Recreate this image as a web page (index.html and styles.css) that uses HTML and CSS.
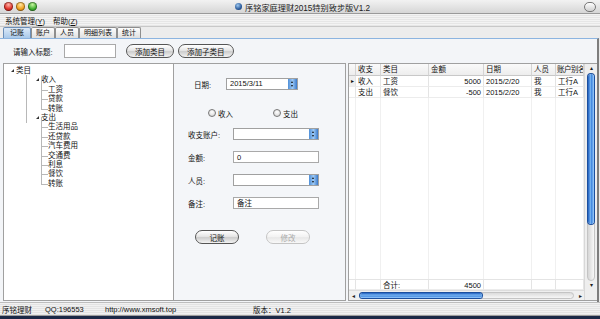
FILE: index.html
```html
<!DOCTYPE html>
<html lang="zh-CN">
<head>
  <meta charset="UTF-8" />
  <title>序铭家庭理财2015特别致步版V1.2</title>
  <link rel="stylesheet" href="styles.css">
</head>
<body>
<div class="window">

  <div class="titlebar">
    <div class="lights">
      <span class="light red"></span>
      <span class="light yellow"></span>
      <span class="light green"></span>
    </div>
    <div class="title"><span class="app-icon"></span>序铭家庭理财2015特别致步版V1.2</div>
    <span class="pill"></span>
  </div>

  <div class="menubar">
    <span>系统管理(<u>Y</u>)</span>
    <span>帮助(<u>Z</u>)</span>
  </div>

  <div class="tabs">
    <span class="tab active">记账</span>
    <span class="tab">账户</span>
    <span class="tab">人员</span>
    <span class="tab">明细列表</span>
    <span class="tab">统计</span>
  </div>

  <div class="page">
    <div class="toolbar">
      <label>请输入标题:</label>
      <input class="field title-field" type="text">
      <button class="aqua">添加类目</button>
      <button class="aqua">添加子类目</button>
    </div>

    <div class="panes">
      <!-- category tree -->
      <div class="tree">
        <ul class="root">
          <li class="open">类目
            <ul>
              <li class="open">收入
                <ul class="leaves">
                  <li>工资</li>
                  <li>贷款</li>
                  <li>转账</li>
                </ul>
              </li>
              <li class="open last">支出
                <ul class="leaves">
                  <li>生活用品</li>
                  <li>还贷款</li>
                  <li>汽车费用</li>
                  <li>交通费</li>
                  <li>利息</li>
                  <li>餐饮</li>
                  <li>转账</li>
                </ul>
              </li>
            </ul>
          </li>
        </ul>
      </div>

      <!-- entry form -->
      <div class="form">
        <div class="row date-row">
          <label>日期:</label>
          <div class="select date"><span>2015/3/11</span><i class="spin"></i></div>
        </div>
        <div class="row radio-row">
          <span class="radio"><i></i>收入</span>
          <span class="radio"><i></i>支出</span>
        </div>
        <div class="row">
          <label>收支账户:</label>
          <div class="select"><span></span><i class="spin"></i></div>
        </div>
        <div class="row">
          <label>金额:</label>
          <div class="field">0</div>
        </div>
        <div class="row">
          <label>人员:</label>
          <div class="select"><span></span><i class="spin"></i></div>
        </div>
        <div class="row">
          <label>备注:</label>
          <div class="field">备注</div>
        </div>
        <div class="row buttons">
          <button class="aqua">记账</button>
          <button class="aqua" disabled>修改</button>
        </div>
      </div>

      <!-- detail grid -->
      <div class="grid">
        <div class="grid-body">
          <div class="cols head">
            <span></span><span>收支</span><span>类目</span><span>金额</span><span>日期</span><span>人员</span><span class="last-col">账户别名</span>
          </div>
          <div class="cols">
            <span class="cur">&#9656;</span><span>收入</span><span>工资</span><span class="num">5000</span><span>2015/2/20</span><span>我</span><span>工行A</span>
          </div>
          <div class="cols">
            <span></span><span>支出</span><span>餐饮</span><span class="num">-500</span><span>2015/2/20</span><span>我</span><span>工行A</span>
          </div>
          <div class="cols filler">
            <span></span><span></span><span></span><span></span><span></span><span></span><span></span>
          </div>
          <div class="cols total">
            <span></span><span></span><span>合计:</span><span class="num">4500</span><span></span><span></span><span></span>
          </div>
          <div class="hscroll">
            <span class="arrow">&#9666;</span>
            <div class="htrack"><div class="hthumb"></div></div>
            <span class="arrow">&#9656;</span>
          </div>
        </div>
        <div class="vscroll">
          <span class="arrow">&#9652;</span>
          <div class="vtrack"><div class="vthumb"></div></div>
          <span class="arrow">&#9662;</span>
        </div>
      </div>
    </div>
  </div>

  <div class="statusbar">
    <span class="s1">序铭理财</span>
    <span class="s2">QQ:196553</span>
    <span class="s3">http://www.xmsoft.top</span>
    <span class="s4">版本：V1.2</span>
  </div>
  <div class="desk"></div>
</div>
</body>
</html>
```

FILE: styles.css
```css
body {
  margin: 0;
  font-family: "Liberation Sans", "Noto Sans CJK SC", sans-serif;
  font-size: 7.5px;
  color: #111;
  background: #1b2846;
}

.window {
  width: 600px;
  height: 319px;
  display: flex;
  flex-direction: column;
  background: #e9e9e9;
  overflow: hidden;
}

/* title bar */
.titlebar {
  height: 13px;
  display: flex;
  align-items: center;
  padding: 0 4px 0 4px;
  background: linear-gradient(#f2f2f2, #d6d6d6);
  border-bottom: 1px solid #9a9a9a;
}

.lights {
  display: flex;
  gap: 3px;
  width: 200px;
}

.light {
  width: 9px;
  height: 9px;
  border-radius: 50%;
  box-shadow: inset 0 0 0 1px rgba(0,0,0,0.35);
}

.red { background: radial-gradient(circle at 50% 30%, #ffb3a8, #e0332a 55%, #9c1510); }
.yellow { background: radial-gradient(circle at 50% 30%, #ffe6a0, #f0a020 55%, #a86500); }
.green { background: radial-gradient(circle at 50% 30%, #c8f5a0, #40b030 55%, #1e7015); }

.title {
  flex: 1;
  display: flex;
  align-items: center;
  gap: 3px;
  padding-left: 31px;
  font-size: 8.2px;
  color: #222;
}

.app-icon {
  width: 7px;
  height: 7px;
  border-radius: 50%;
  background: radial-gradient(circle at 40% 35%, #9ec8f0, #2a5a9a 60%, #0d2a55);
}

.pill {
  width: 10px;
  height: 8px;
  border-radius: 5px;
  border: 1px solid #777;
  background: linear-gradient(#fff, #cfcfcf);
}

/* menu */
.menubar {
  height: 12px;
  display: flex;
  align-items: center;
  gap: 8px;
  padding-left: 5px;
  background: repeating-linear-gradient(#f3f3f3 0 1px, #e6e6e6 1px 2px);
  border-bottom: 1px solid #c8c8c8;
}

.menubar u { text-decoration: underline; }

/* tabs */
.tabs {
  height: 11px;
  display: flex;
  align-items: flex-end;
  padding-left: 3px;
  background: #ececec;
}

.tab {
  height: 10px;
  line-height: 10px;
  padding: 0 4px;
  font-size: 7px;
  border: 1px solid #8e8e8e;
  border-bottom: none;
  border-radius: 2px 2px 0 0;
  background: linear-gradient(#fdfdfd, #e0e0e0);
}

.tab.active {
  padding: 0 6px;
  background: linear-gradient(#dbe9f8, #a9c9ea);
  border-color: #6c8fb8;
}

/* tab page */
.page {
  flex: 1;
  display: flex;
  flex-direction: column;
  background: #f3f5f8;
  border-top: 1px solid #8cb4e0;
  border-right: 2px solid #7d7d7d;
  margin-right: 1px;
}

.toolbar {
  height: 24px;
  display: flex;
  align-items: center;
  padding-left: 13px;
}

.toolbar label { width: 51px; }

.field {
  height: 12px;
  line-height: 12px;
  padding: 0 3px;
  border: 1px solid #a9a9a9;
  background: #fff;
  box-sizing: border-box;
  font-family: inherit;
  font-size: inherit;
}

.title-field {
  width: 52px;
  height: 14px;
  margin-right: 10px;
}

button.aqua {
  height: 14px;
  padding: 0 8px;
  margin-right: 4px;
  font-family: inherit;
  font-size: 7.5px;
  color: #111;
  border: 1px solid #555;
  border-radius: 7px;
  background: linear-gradient(#ffffff, #e6e6e6 45%, #cdcdcd 55%, #f2f2f2);
  box-shadow: inset 0 0 1px #fff;
}

button.aqua:disabled {
  color: #aaa;
  border-color: #c4c4c4;
  background: linear-gradient(#ffffff, #f2f2f2 50%, #e8e8e8 55%, #f8f8f8);
}

.panes {
  flex: 1;
  display: flex;
  padding-left: 3px;
  margin-bottom: 1px;
}

/* tree */
.tree {
  width: 172px;
  background: #fff;
  border: 1px solid #a0a0a0;
  padding-top: 2px;
  box-sizing: border-box;
}

.tree ul {
  list-style: none;
  margin: 0;
  padding: 0;
}

.tree li {
  position: relative;
  line-height: 9.4px;
}

.root > li { padding-left: 12px; }
.root > li > ul > li { padding-left: 14px; }
.root > li > ul { position: relative; }
.root > li > ul::before {
  content: "";
  position: absolute;
  left: 10px;
  top: 0;
  height: 48px;
  border-left: 1px solid #b8b8b8;
}

.tree li.open::before {
  content: "";
  position: absolute;
  top: 3px;
  width: 0;
  height: 0;
  border-left: 3px solid transparent;
  border-bottom: 3px solid #333;
}

.root > li.open::before { left: 7px; }
.root > li > ul > li.open::before { left: 20px; }
.root > li > ul > li.open { padding-left: 25px; }

.leaves {
  position: relative;
  margin-left: -4px !important;
}

.leaves li { padding-left: 11px; }
.leaves li::before {
  content: "";
  position: absolute;
  left: 4px;
  top: -5px;
  width: 6px;
  height: 10px;
  border-left: 1px solid #b8b8b8;
  border-bottom: 1px solid #b8b8b8;
}

/* form */
.form {
  width: 173px;
  box-sizing: border-box;
  border: 1px solid #a0a0a0;
  border-left: none;
  background: #f4f6f9;
  display: flex;
  flex-direction: column;
  padding-left: 14px;
}

.row {
  display: flex;
  align-items: center;
  height: 12px;
  margin-top: 11px;
}

.row label { width: 45px; }
.row .field, .row .select { width: 86px; }

.date-row { margin-top: 14px; padding-left: 6px; }
.date-row label { width: 32px; }
.date-row .select { width: 72px; }

.radio-row {
  margin-top: 17px;
  padding-left: 20px;
  gap: 40px;
}

.radio {
  display: flex;
  align-items: center;
  gap: 2px;
}

.radio i {
  width: 6px;
  height: 6px;
  border-radius: 50%;
  border: 1px solid #777;
  background: radial-gradient(circle at 50% 35%, #fff, #d0d0d0);
}

.radio-row + .row { margin-top: 9px; }

.select {
  height: 12px;
  display: flex;
  border: 1px solid #a0a0a0;
  background: #fff;
  box-sizing: border-box;
}

.select span {
  flex: 1;
  line-height: 10px;
  padding-left: 3px;
}

.spin {
  width: 9px;
  background: linear-gradient(90deg, #4f8fd8, #9cc8f4 50%, #3b7acb);
  position: relative;
}

.spin::before, .spin::after {
  content: "";
  position: absolute;
  left: 3px;
  border-left: 1.5px solid transparent;
  border-right: 1.5px solid transparent;
}

.spin::before { top: 2px; border-bottom: 2px solid #111; }
.spin::after { bottom: 2px; border-top: 2px solid #111; }

.buttons {
  margin-top: 21px;
  height: 14px;
  padding-left: 7px;
  gap: 27px;
}

.buttons button.aqua {
  width: 44px;
  margin: 0;
}

/* grid */
.grid {
  flex: 1;
  display: flex;
  margin-left: 2px;
  background: #fff;
  border: 1px solid #a0a0a0;
  border-right: none;
}

.grid-body {
  flex: 1;
  display: flex;
  flex-direction: column;
}

.cols {
  display: grid;
  grid-template-columns: 7px 25px 48px 55px 48px 24px 28px;
  height: 11px;
  line-height: 11px;
}

.cols span {
  border-right: 1px solid #e4e4e4;
  border-bottom: 1px solid #ececec;
  padding-left: 2px;
  white-space: nowrap;
  overflow: hidden;
}

.cols .last-col { padding-left: 1px; letter-spacing: -0.5px; }

.cols .num {
  text-align: right;
  padding: 0 2px 0 0;
}

.cols .cur {
  padding: 0;
  font-size: 6px;
  text-align: center;
  background: #efefef;
}

.head {
  height: 12px;
  line-height: 12px;
  background: linear-gradient(#fafafa, #ececec);
}

.head span {
  border-right: 1px solid #d4d4d4;
  border-bottom: 1px solid #c8c8c8;
}

.filler { flex: 1; }
.filler span { border-bottom: none; border-right-color: #f0f0f0; }
.filler span:first-child { background: #fff; }

.total span { border-top: 1px solid #e4e4e4; }

.hscroll {
  height: 9px;
  display: flex;
  align-items: center;
  background: #efefef;
  border-top: 1px solid #ddd;
}

.arrow {
  width: 8px;
  font-size: 6px;
  text-align: center;
  color: #222;
}

.htrack {
  flex: 1;
  height: 7px;
  border-radius: 4px;
  background: linear-gradient(#dcdcdc, #f6f6f6);
  border: 1px solid #c4c4c4;
  margin: 0 2px;
  box-sizing: border-box;
  display: flex;
}

.hthumb {
  width: 122px;
  border-radius: 4px;
  background: linear-gradient(#1f5fc0, #7ab6f2 45%, #3f86de 60%, #9fd0ff);
  box-shadow: 0 0 0 1px #1b4f9e;
}

.vscroll {
  width: 12px;
  display: flex;
  flex-direction: column;
  align-items: center;
  background: #eeeeee;
  border-left: 1px solid #d8d8d8;
  padding-bottom: 10px;
}

.vscroll .arrow { height: 9px; line-height: 9px; }

.vtrack {
  flex: 1;
  width: 8px;
  border-radius: 4px;
  background: linear-gradient(90deg, #d6d6d6, #f8f8f8);
  border: 1px solid #c4c4c4;
  box-sizing: border-box;
}

.vthumb {
  height: 150px;
  border-radius: 4px;
  background: linear-gradient(90deg, #1f5fc0, #7ab6f2 45%, #3f86de 60%, #9fd0ff);
  box-shadow: 0 0 0 1px #1b4f9e;
}

/* status bar */
.statusbar {
  height: 12px;
  display: flex;
  align-items: center;
  background: repeating-linear-gradient(#f1f1f1 0 1px, #e3e3e3 1px 2px);
  border-top: 1px solid #bdbdbd;
  border-bottom: 1px solid #9c9c9c;
  padding-left: 2px;
}

.s1 { width: 43px; }
.s2 { width: 60px; }
.s3 { width: 148px; }

.desk {
  height: 3px;
  background: #1b2846;
}
```
